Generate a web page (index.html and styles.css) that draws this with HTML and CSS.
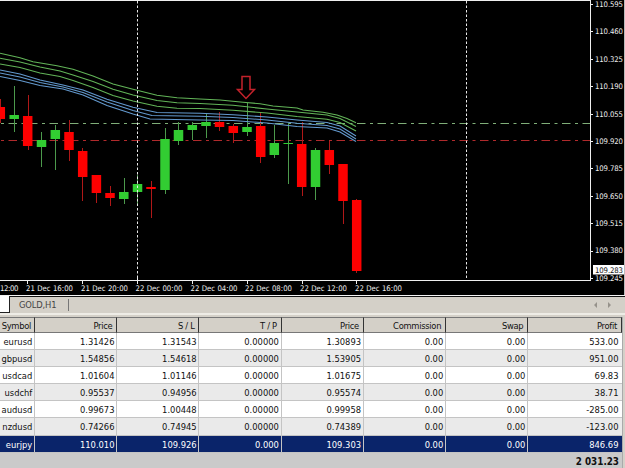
FILE: index.html
```
<!DOCTYPE html>
<html lang="en">
<head>
<meta charset="utf-8">
<title>Trading terminal</title>
<link rel="stylesheet" href="styles.css">
</head>
<body>
<main class="terminal">
  <svg class="chart" width="625" height="295" viewBox="0 0 625 295">
    <path class="frame" d="M0 .5H591M590.5 0V280.5M0 280.5H591"/>
    <path class="ticks" d="M27.5 281v3M82.5 281v3M137.5 278v6M192.5 281v3M247.5 281v3M302.5 281v3M356.5 281v3M591 4.5h2M591 31.5h2M591 59.5h2M591 86.5h2M591 114.5h2M591 141.5h2M591 168.5h2M591 196.5h2M591 223.5h2M591 251.5h2M591 278.5h2"/>
    <path class="level level-green" d="M-12 123.5H590"/>
    <path class="level level-red" d="M-12 140.5H590"/>
    <g class="wicks">
      <path class="green" d="M14.5 86V132M41.5 132V167M55.5 125V170M124.5 178V204M137.5 175V206M165.5 128V194M178.5 122V145M192.5 122V140M206.5 114V138M247.5 103V136M274.5 125V158M288.5 123V184M315.5 148V200"/>
      <path class="red" d="M.5 99V123M28.5 95V150M69.5 120V161M82.5 148V201M96.5 175V203M110.5 186V206M151.5 181V218M219.5 112V131M233.5 124V143M260.5 112V163M302.5 122V196M329.5 141V174M343.5 164V224M356.5 199V273"/>
    </g>
    <g class="bodies">
      <path class="green" d="M14.2 115V119M41.5 140V147M55.3 130V139M123.8 192V199M137.5 184V192M165 139V190M178.5 130V141M192.3 125V130M206 122V126M247 127V132M274.3 143V155M288.2 143V144M315.5 150V187"/>
      <path class="red" d="M.3 107V119M27.7 116V146M69 132V150M82.7 151V177M96.4 175V193M110 193V198M151 187V189M219.5 122V127M233.3 126V133M260.7 126V157M301.7 144V187M329.3 150V165M343 164V201M356.7 200V271"/>
    </g>
    <g class="ribbon">
      <path class="green" d="M0 53.3L20 57.7L33 61.7L57 65.7L73 69.3L93 76L113 84L133 89.3L157 95.3L177 97.7L200 99L220 100L243 102.3L260 103.7L273 106L297 108L303 110L323 112.3L337 115L347 118.5L356 122.7"/>
      <path class="green" d="M0 58.3L20 62L40 67L60 71L73 75L93 81.5L113 89.3L133 95L157 100.5L177 102.8L200 103.5L233 105.3L267 109L297 112L327 115L340 118.5L356 126.5"/>
      <path class="green" d="M0 64L20 67.5L40 73L60 76.5L73 80.5L93 87.5L113 95.5L133 101L157 106.3L177 108.3L200 108.5L233 110.3L267 113L297 116.5L327 119.3L340 122.5L356 131"/>
      <path class="blue" d="M0 70L20 74L40 80L63 85L83 90L107 99.3L133 107.3L157 112.5L200 113.3L233 114.8L267 117L297 120L327 122.5L340 126L356 136"/>
      <path class="blue" d="M0 73L20 77L40 82.5L63 87L83 92.5L107 102L133 110.5L152 115.5L200 116.3L233 117.5L267 120L297 123.3L327 125.5L340 129L356 139"/>
      <path class="blue" d="M0 76.5L20 80.5L40 85.5L63 89L83 95L107 105.5L133 114L150 119L200 120L233 120.5L267 123L297 126.5L327 128L340 132L356 141.5"/>
    </g>
    <path class="divider" d="M137.5 1V278M466.5 1V280"/>
    <path class="arrow" d="M242 76.5H250V89.5H254.5L246 98.5L237.5 89.5H242Z"/>
    <g class="axis">
      <text x="0" y="291" textLength="18.5">12:00</text>
      <text x="26" y="291" textLength="47">21 Dec 16:00</text>
      <text x="81" y="291" textLength="47">21 Dec 20:00</text>
      <text x="135.5" y="291" textLength="47">22 Dec 00:00</text>
      <text x="190.5" y="291" textLength="47">22 Dec 04:00</text>
      <text x="245" y="291" textLength="47">22 Dec 08:00</text>
      <text x="300" y="291" textLength="47">22 Dec 12:00</text>
      <text x="355" y="291" textLength="47">22 Dec 16:00</text>
      <text x="595" y="7" textLength="28">110.595</text>
      <text x="595" y="34" textLength="28">110.460</text>
      <text x="595" y="62" textLength="28">110.325</text>
      <text x="595" y="89" textLength="28">110.190</text>
      <text x="595" y="117" textLength="28">110.055</text>
      <text x="595" y="144" textLength="28">109.920</text>
      <text x="595" y="171" textLength="28">109.785</text>
      <text x="595" y="199" textLength="28">109.650</text>
      <text x="595" y="226" textLength="28">109.515</text>
      <text x="595" y="253" textLength="28">109.380</text>
      <text x="595" y="281" textLength="28">109.245</text>
    </g>
    <rect class="price-tag" x="593" y="265" width="31" height="9.5"/>
    <text class="price-now" x="595" y="273" textLength="28">109.283</text>
    <path class="edge" d="M624.5 0V295"/>
  </svg>
  <nav class="tabs">
    <span class="tab-active"></span>
    <span class="tab">GOLD,H1</span>
    <svg class="arrows" width="22" height="8" viewBox="0 0 22 8"><path d="M5 1V7L2 4ZM16 1V7L19 4Z"/></svg>
  </nav>
  <section class="orders">
    <div class="row head"><span>Symbol</span><span>Price</span><span>S / L</span><span>T / P</span><span>Price</span><span>Commission</span><span>Swap</span><span>Profit</span></div>
    <div class="row"><span>eurusd</span><span>1.31426</span><span>1.31543</span><span>0.00000</span><span>1.30893</span><span>0.00</span><span>0.00</span><span>533.00</span></div>
    <div class="row alt"><span>gbpusd</span><span>1.54856</span><span>1.54618</span><span>0.00000</span><span>1.53905</span><span>0.00</span><span>0.00</span><span>951.00</span></div>
    <div class="row"><span>usdcad</span><span>1.01604</span><span>1.01146</span><span>0.00000</span><span>1.01675</span><span>0.00</span><span>0.00</span><span>69.83</span></div>
    <div class="row alt"><span>usdchf</span><span>0.95537</span><span>0.94956</span><span>0.00000</span><span>0.95574</span><span>0.00</span><span>0.00</span><span>38.71</span></div>
    <div class="row"><span>audusd</span><span>0.99673</span><span>1.00448</span><span>0.00000</span><span>0.99958</span><span>0.00</span><span>0.00</span><span>-285.00</span></div>
    <div class="row alt"><span>nzdusd</span><span>0.74266</span><span>0.74945</span><span>0.00000</span><span>0.74389</span><span>0.00</span><span>0.00</span><span>-123.00</span></div>
    <div class="row selected"><span>eurjpy</span><span>110.010</span><span>109.926</span><span>0.000</span><span>109.303</span><span>0.00</span><span>0.00</span><span>846.69</span></div>
    <div class="total">2 031.23</div>
  </section>
</main>
</body>
</html>
```
FILE: styles.css
```
* { box-sizing: border-box; }
body {
  margin: 0;
  overflow: hidden;
  background: #d4d0c8;
  font-family: "DejaVu Sans Condensed", "DejaVu Sans", sans-serif;
  font-stretch: condensed;
  font-size: 9.3px;
  color: #111;
}
.terminal { width: 625px; height: 468px; display: flex; flex-direction: column; overflow: hidden; }
.chart { display: block; flex: none; background: #000; }
.chart path { fill: none; }
.frame, .ticks { stroke: #eee; }
.level { stroke-dasharray: 8.5 4.5 3 4.5; }
.level-green { stroke: #7fae78; }
.level-red { stroke: #b02a2c; }
.wicks .green { stroke: #4c9a4c; }
.wicks .red { stroke: #b01818; }
.chart .bodies { stroke-width: 9.5; }
.bodies .green { stroke: #32cd32; }
.bodies .red { stroke: #fe0000; }
.ribbon { stroke-width: 1.1; }
.ribbon .green { stroke: #62b458; }
.ribbon .blue { stroke: #6399ce; }
.divider { stroke: #e8e8e8; stroke-dasharray: 2.5 2; }
.arrow { stroke: #c3222b; stroke-width: 1.5; }
.axis text, .price-now { font-size: 7.7px; fill: #eee; }
.price-tag { fill: #fff; }
.chart .price-now { fill: #111; }
.edge { stroke: #bbb; }

.tabs {
  height: 22px;
  flex: none;
  display: flex;
  align-items: flex-start;
  border-top: 1px solid #f4f4f4;
  background: linear-gradient(#111 0 1px, #d4d0c8 1px 17px, #eeece6 17px 19px, #d4d0c8 19px);
}
.tab-active { width: 10px; height: 17px; background: #fff; border-right: 1px solid #222; border-bottom: 1px solid #222; }
.tab { margin: 3px 0 0 9px; width: 50px; height: 12px; line-height: 11px; letter-spacing: -.15px; color: #444; border-right: 1px solid #777; }
.arrows { margin: 5px 11px 0 auto; fill: #96928b; }

.orders { width: 623px; flex: 1; display: flex; flex-direction: column; border-right: 1px solid #aaa; }
.row { display: grid; grid-template-columns: 35px repeat(6, 82.2px) 1fr; height: 17.1px; flex: none; background: #fff; }
.row span {
  padding-right: 1.7px;
  text-align: right;
  line-height: 17px;
  white-space: nowrap;
  overflow: hidden;
  border-right: 1px solid #c4c4c4;
  border-bottom: 1px solid #c4c4c4;
}
.row span:last-child { padding-right: 3.5px; border-right: 0; }
.alt { background: #eaeaea; }
.head { height: 16px; background: #d4d0c8; }
.head span { border-top: 1px solid #777; border-right: 1px solid #333; border-bottom: 1px solid #777; line-height: 16px; padding-right: 3.8px; letter-spacing: -.3px; }
.head span:first-child { padding-right: 3px; letter-spacing: -.3px; }
.head span:last-child { padding-right: 4px; border-right: 1px solid #333; }
.selected { background: #0a246a; color: #fff; }
.total { flex: 1; background: #cacaca; text-align: right; font-weight: bold; font-size: 9.8px; line-height: 17px; padding-right: 3px; }
```
